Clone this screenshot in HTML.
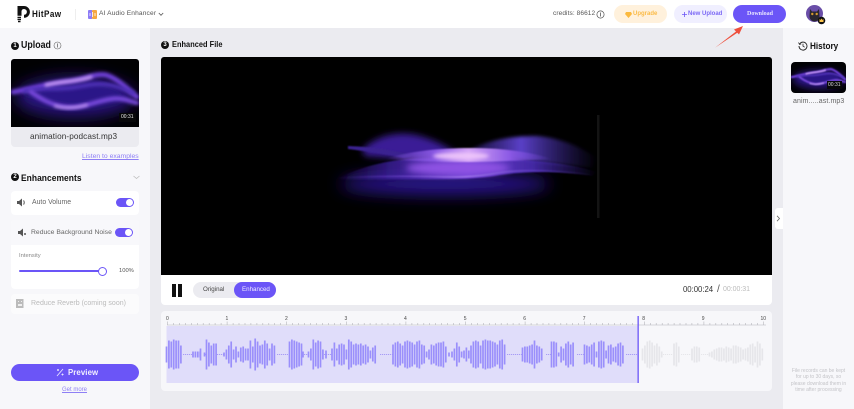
<!DOCTYPE html>
<html><head><meta charset="utf-8"><style>
html,body{margin:0;padding:0;width:854px;height:409px;overflow:hidden;background:#ebebf0;font-family:"Liberation Sans",sans-serif;color:#222}
div,span,svg{position:absolute;box-sizing:border-box;white-space:nowrap}
.num{width:8px;height:8px;border-radius:50%;background:#111;color:#fff;font-size:6px;line-height:8px;text-align:center;font-weight:bold}
.h{font-weight:bold;color:#111;line-height:12px;transform:scaleX(.9);transform-origin:0 50%}
.card{background:#fff;border-radius:4px}
.tog{width:18px;height:9px;border-radius:5px;background:#6b55f7}
.tog i{position:absolute;right:1px;top:1px;width:7px;height:7px;border-radius:50%;background:#fff}
.lb{color:#666;line-height:10px}
</style></head><body>
<svg width="0" height="0" style="left:0;top:0"><defs>
<linearGradient id="f2" x1="0" x2="1" y1="0" y2="0"><stop offset="0" stop-color="#3a1e9a" stop-opacity="0"/><stop offset=".2" stop-color="#3a1e9a" stop-opacity=".8"/><stop offset=".5" stop-color="#6e40d4"/><stop offset=".75" stop-color="#4a2cb4" stop-opacity=".9"/><stop offset="1" stop-color="#3a22a0" stop-opacity="0"/></linearGradient>
<linearGradient id="f3" x1="0" x2="1" y1="0" y2="0"><stop offset="0" stop-color="#8a58e4" stop-opacity="0"/><stop offset=".3" stop-color="#8a58e4"/><stop offset=".5" stop-color="#d4a4f6"/><stop offset=".75" stop-color="#8a58e4"/><stop offset="1" stop-color="#6a42d0" stop-opacity="0"/></linearGradient>
<linearGradient id="f4" x1="0" x2="1" y1="0" y2="0"><stop offset="0" stop-color="#7a50dc" stop-opacity="0"/><stop offset=".2" stop-color="#7a50dc" stop-opacity=".5"/><stop offset=".5" stop-color="#a880ee"/><stop offset=".8" stop-color="#6a42cc" stop-opacity=".5"/><stop offset="1" stop-color="#6a42cc" stop-opacity="0"/></linearGradient>
<linearGradient id="f5" x1="0" x2="1" y1="0" y2="0"><stop offset="0" stop-color="#4a30b0" stop-opacity=".3"/><stop offset=".4" stop-color="#5a40c8"/><stop offset="1" stop-color="#3a2595" stop-opacity="0"/></linearGradient>
<filter id="b0" x="-20%" y="-400%" width="140%" height="900%"><feGaussianBlur stdDeviation=".9"/></filter>
<filter id="b4" x="-20%" y="-100%" width="140%" height="300%"><feGaussianBlur stdDeviation="1.500"/></filter>
<filter id="b1" x="-30%" y="-100%" width="160%" height="300%"><feGaussianBlur stdDeviation="1.800"/></filter>
<filter id="b2" x="-30%" y="-150%" width="160%" height="400%"><feGaussianBlur stdDeviation="3.500"/></filter>
<filter id="b3" x="-40%" y="-300%" width="180%" height="700%"><feGaussianBlur stdDeviation="8"/></filter>
<symbol id="thumb" viewBox="0 0 128 68">
<rect width="128" height="68" fill="#010103"/>
<ellipse cx="64" cy="38" rx="60" ry="20" fill="#2a1480" filter="url(#b3)"/>
<path d="M5 33C30 30 60 28 80 22C100 24 115 34 125 40C110 38 90 42 70 47C50 48 30 40 5 33Z" fill="#2c1488" filter="url(#b2)"/>
<g fill="none" stroke-linecap="round">
<path d="M2 33C20 30 40 24 60 22C75 20 85 14 95 16C108 20 118 32 126 38" stroke="#7040d8" stroke-width="5" filter="url(#b4)"/>
<path d="M14 32C30 28 50 31 65 28C80 26 92 20 122 34" stroke="#5030b8" stroke-width="4" filter="url(#b4)"/>
<path d="M35 26C50 22 65 23 80 18" stroke="#d0a6f6" stroke-width="3" filter="url(#b4)"/>
<path d="M20 33C30 40 40 46 55 48C70 50 85 42 100 40C110 38 118 42 126 44" stroke="#7848dc" stroke-width="4.500" filter="url(#b4)"/>
<path d="M44 47C55 50 65 49 76 46" stroke="#cfa8f6" stroke-width="2.200" filter="url(#b4)"/>
</g>
</symbol>
</defs></svg>

<!-- header -->
<div style="left:0;top:0;width:854px;height:28px;background:#fff"></div>
<svg style="left:16px;top:5px" width="15" height="18" viewBox="0 0 15 18"><path d="M1.500 1H8A5.800 5.800 0 0 1 8 12.800L8 9.800A2.900 2.900 0 0 0 8 4C6 4 5.500 5.500 5.500 7V10.800H1.500Z" fill="#111"/><path d="M1.500 11.800h3.500v1.300H1.500zM1.500 13.800h3.500v1.300H1.500zM2 15.800h2.500V17.300H2z" fill="#111"/></svg>
<span class="h" style="left:32px;top:8px;font-size:9px;line-height:13px;letter-spacing:.45px">HitPaw</span>
<div style="left:75px;top:9px;width:1px;height:11px;background:#eee"></div>
<svg style="left:88px;top:10px" width="9" height="9" viewBox="0 0 9 9"><rect width="4.500" height="9" rx="1" fill="#8d7cf6"/><rect x="4" width="5" height="9" rx="1" fill="#f5a742"/><path d="M2 3v3M4.500 2v5M7 3v3" stroke="#fff" stroke-width=".8"/></svg>
<span style="left:99px;top:9px;font-size:6.600px;line-height:10px;color:#555;letter-spacing:.15px">AI Audio Enhancer</span>
<svg style="left:158px;top:12px" width="6" height="5" viewBox="0 0 6 5"><path d="M.8 1l2.200 2.300L5.200 1" fill="none" stroke="#555" stroke-width=".8"/></svg>
<span style="left:553px;top:9px;font-size:6.500px;line-height:10px;color:#555;letter-spacing:.1px">credits: 86612</span>
<svg style="left:596px;top:10px" width="9" height="9" viewBox="0 0 9 9"><circle cx="4.500" cy="4.500" r="3.600" fill="none" stroke="#555" stroke-width=".7"/><path d="M4.500 2.500v4" stroke="#555" stroke-width=".8"/></svg>
<div style="left:614px;top:5px;width:53px;height:18px;border-radius:9px;background:#fff1dc"></div>
<svg style="left:625px;top:12px" width="7" height="6" viewBox="0 0 7 6"><path d="M1 0h5l1 2-3.500 4L0 2z" fill="#fbb93e"/></svg>
<span style="left:633px;top:10px;font-size:6px;line-height:8px;font-weight:bold;color:#fbbb47">Upgrade</span>
<div style="left:674px;top:5px;width:53px;height:18px;border-radius:9px;background:#f0efff"></div>
<svg style="left:682px;top:12px" width="5" height="5" viewBox="0 0 5 5"><path d="M2.500 0v5M0 2.500h5" stroke="#6b55f7" stroke-width=".8"/></svg>
<span style="left:688px;top:10px;font-size:6px;line-height:8px;font-weight:bold;color:#7b68f5">New Upload</span>
<div style="left:733px;top:5px;width:53px;height:18px;border-radius:9px;background:#6b55f7"></div>
<span style="left:747px;top:10px;font-size:6px;line-height:8px;font-weight:bold;color:#e8e5ff;font-family:'Liberation Serif',serif">Download</span>
<svg style="left:806px;top:5px" width="20" height="20" viewBox="0 0 20 20"><circle cx="8.500" cy="8.500" r="8.500" fill="#6a4ea8"/><path d="M4 4l2 2.500h5L13 4l.5 7c0 3.500-2.500 5.500-5 5.500S3.500 14.500 3.500 11z" fill="#2a2630"/><circle cx="6.300" cy="9" r="1.200" fill="#d89a30"/><circle cx="10.700" cy="9" r="1.200" fill="#d89a30"/><circle cx="15.500" cy="15.500" r="3.800" fill="#111"/><path d="M13.500 14l1 1 1-1.500 1 1.500 1-1v3h-4z" fill="#fbc44b"/></svg>

<!-- panels -->
<div style="left:0;top:28px;width:150px;height:381px;background:#f7f7fa"></div>
<div style="left:783px;top:28px;width:71px;height:381px;background:#f7f7fa"></div>
<div style="left:775px;top:208px;width:8px;height:21px;background:#fff;border-radius:3px 0 0 3px"></div>
<svg style="left:776px;top:215px" width="5" height="7" viewBox="0 0 5 7"><path d="M1 .8l2.500 2.700L1 6.200" fill="none" stroke="#666" stroke-width=".8"/></svg>

<!-- upload -->
<div class="num" style="left:11px;top:42px">1</div>
<span class="h" style="left:21px;top:39px;font-size:9.800px;line-height:13px">Upload</span>
<svg style="left:53px;top:41px" width="9" height="9" viewBox="0 0 9 9"><circle cx="4.500" cy="4.500" r="3.500" fill="none" stroke="#666" stroke-width=".6"/><path d="M4.500 2.500v4" stroke="#666" stroke-width=".8"/></svg>
<div style="left:11px;top:127px;width:128px;height:20px;background:#ebebf0;border-radius:0 0 4px 4px"></div>
<svg style="left:11px;top:59px;border-radius:3px 3px 0 0" width="128" height="68"><use href="#thumb"/></svg>
<div style="left:119px;top:113px;width:17px;height:9px;background:#08080a"></div>
<span style="left:121px;top:114px;font-size:5px;line-height:7px;color:#eee">00:31</span>
<span style="left:30px;top:131px;font-size:8.200px;line-height:12px;color:#333;letter-spacing:.1px">animation-podcast.mp3</span>
<span style="left:82px;top:152px;font-size:6.800px;line-height:9px;color:#8e7ff5;text-decoration:underline">Listen to examples</span>

<!-- enhancements -->
<div class="num" style="left:11px;top:173px">2</div>
<span class="h" style="left:21px;top:171px;font-size:9.400px;line-height:13px;letter-spacing:.05px">Enhancements</span>
<svg style="left:133px;top:175px" width="7" height="5" viewBox="0 0 7 5"><path d="M.5 1l3 2.500 3-2.500" fill="none" stroke="#bbb" stroke-width=".7"/></svg>

<div class="card" style="left:11px;top:191px;width:128px;height:24px"></div>
<svg style="left:17px;top:198px" width="9" height="9" viewBox="0 0 9 9"><path d="M0 3h2l3-2.500v8L2 6H0z" fill="#555"/><path d="M6.500 2.500c1 1 1 3 0 4" fill="none" stroke="#555"/></svg>
<span class="lb" style="left:32px;top:198px;font-size:6.900px">Auto Volume</span>
<div class="tog" style="left:116px;top:198px"><i></i></div>

<div class="card" style="left:11px;top:220px;width:128px;height:69px"></div>
<div style="left:11px;top:220px;width:128px;height:25px;background:#f8f8fb;border-radius:4px 4px 0 0"></div>
<svg style="left:18px;top:228px" width="9" height="9" viewBox="0 0 9 9"><path d="M0 3h2l3-2.500v8L2 6H0z" fill="#555"/><circle cx="7" cy="6" r="1" fill="#555"/></svg>
<span class="lb" style="left:31px;top:228px;font-size:6.800px">Reduce Background Noise</span>
<div class="tog" style="left:115px;top:228px"><i></i></div>
<span style="left:19px;top:252px;font-size:5.800px;line-height:8px;color:#888">Intensity</span>
<div style="left:19px;top:270px;width:84px;height:2px;border-radius:1px;background:#6b55f7"></div>
<div style="left:98px;top:267px;width:9px;height:9px;border-radius:50%;background:#fff;border:1px solid #6b55f7"></div>
<span style="left:119px;top:267px;font-size:5.800px;line-height:8px;color:#555">100%</span>

<div style="left:11px;top:294px;width:128px;height:20px;background:#fbfbfc;border-radius:4px"></div>
<svg style="left:16px;top:299px" width="8" height="9" viewBox="0 0 8 9"><rect width="7.500" height="9" fill="#bbb"/><path d="M2 2h1v1H2zM5 2h1v1H5zM2 5h4v2H2z" fill="#eee"/></svg>
<span class="lb" style="left:31px;top:299px;font-size:7px;color:#bbb">Reduce Reverb (coming soon)</span>

<div style="left:11px;top:364px;width:128px;height:17px;border-radius:9px;background:#6b55f7"></div>
<svg style="left:56px;top:367px" width="9" height="10" viewBox="0 0 9 10"><path d="M1 9l6-7M2 2v2M1 3h2M6.500 6.500v2M5.500 7.500h2" stroke="#e6e2ff" stroke-width=".9" fill="none"/></svg>
<span style="left:68px;top:367px;font-size:7.800px;line-height:11px;font-weight:bold;color:#f2f0ff;letter-spacing:.1px">Preview</span>
<span style="left:62px;top:386px;font-size:6px;line-height:8px;color:#8e7ff5;text-decoration:underline">Get more</span>

<!-- center -->
<div class="num" style="left:161px;top:41px">3</div>
<span class="h" style="left:172px;top:39px;font-size:8.200px;line-height:12px;letter-spacing:.05px">Enhanced File</span>

<svg style="left:161px;top:57px;border-radius:3px 3px 0 0" width="611" height="218" viewBox="161 57 611 218">
<rect x="161" y="57" width="611" height="218" fill="#000"/>
<!-- underglow -->
<ellipse cx="445" cy="184" rx="105" ry="11" fill="#2c1290" filter="url(#b3)"/>
<!-- top lobes -->
<path d="M362 150C375 136 398 130 420 136C435 140 445 146 455 152L420 160L365 156Z" fill="#3a1e96" filter="url(#b2)"/>
<path d="M470 150C485 142 505 136 537 136C562 138 582 148 597 158L592 168L520 160L478 156Z" fill="url(#f5)" filter="url(#b1)"/>
<!-- left streak -->
<path d="M348 146C375 147 395 150 412 156L404 158C385 154 365 151 348 149Z" fill="#3a2090" filter="url(#b0)"/>
<!-- lower mass -->
<path d="M338 178C372 162 400 158 440 158C490 156 560 160 597 172L592 176C560 171 530 171 500 175C470 181 420 179 338 180Z" fill="url(#f2)" filter="url(#b0)"/>
<ellipse cx="458" cy="168" rx="52" ry="7" fill="#8f52e4" filter="url(#b2)"/>
<!-- upper central band -->
<path d="M385 159C410 151 440 148 470 148C495 148 525 150 552 159C510 161 490 162 460 162C435 162 410 161 385 159Z" fill="url(#f3)" filter="url(#b0)"/>
<ellipse cx="461" cy="156" rx="28" ry="3.500" fill="#f0c8fb" opacity=".9" filter="url(#b1)"/>
<!-- faint edge highlight -->
<path d="M337 178C370 176 397 176 430 176.500C450 177 470 178 497 173C515 170 545 169 593 175" fill="none" stroke="url(#f4)" stroke-width="1.300" filter="url(#b0)"/>
<rect x="597" y="115" width="2.500" height="103" fill="#141414"/>
</svg>

<div class="card" style="left:161px;top:275px;width:611px;height:30px;border-radius:0 0 4px 4px"></div>
<div style="left:172px;top:284px;width:4px;height:13px;background:#111"></div>
<div style="left:178px;top:284px;width:4px;height:13px;background:#111"></div>
<div style="left:193px;top:282px;width:83px;height:16px;border-radius:8px;background:#ebebf0"></div>
<div style="left:234px;top:282px;width:42px;height:16px;border-radius:8px;background:#6b55f7"></div>
<span style="left:203px;top:286px;font-size:6.200px;line-height:8px;color:#444">Original</span>
<span style="left:242px;top:286px;font-size:6.200px;line-height:8px;color:#efecff">Enhanced</span>
<span style="left:683px;top:285px;font-size:7.800px;line-height:10px;color:#333;letter-spacing:-.03px">00:00:24</span>
<span style="left:717px;top:284px;font-size:10px;line-height:11px;color:#555">/</span>
<span style="left:723px;top:285px;font-size:7px;line-height:10px;color:#bbb;letter-spacing:-.03px">00:00:31</span>

<!-- timeline -->
<div style="left:161px;top:311px;width:611px;height:80px;background:#f7f7fa;border-radius:4px"></div>
<svg style="left:161px;top:311px" width="611" height="80" viewBox="161 311 611 80">
<rect x="166.500" y="326" width="472" height="57" fill="#e0ddfa"/>
<path d="M167 325H766" stroke="#c9c9cf" stroke-width=".8"/>
<g stroke="#b5b5bb" stroke-width=".6"><path id="rk" d="M167.500 321.500V325M173.500 323V325M179.400 323V325M185.400 323V325M191.300 323V325M197.300 323V325M203.200 323V325M209.200 323V325M215.100 323V325M221.100 323V325"/><use href="#rk" x="59.600"/><use href="#rk" x="119.200"/><use href="#rk" x="178.800"/><use href="#rk" x="238.400"/><use href="#rk" x="298"/><use href="#rk" x="357.600"/><use href="#rk" x="417.200"/><use href="#rk" x="476.800"/><use href="#rk" x="536.400"/><path d="M763.500 321.500V325"/></g>
<g font-family="Liberation Sans" font-size="5" fill="#444"><text x="166" y="320">0</text><text x="225.500" y="320">1</text><text x="285" y="320">2</text><text x="344.500" y="320">3</text><text x="404" y="320">4</text><text x="463.800" y="320">5</text><text x="523.300" y="320">6</text><text x="582.800" y="320">7</text><text x="642.300" y="320">8</text><text x="701.800" y="320">9</text><text x="760.500" y="320">10</text></g>
<g transform="translate(0 354.500)" fill="none">
<path d="M183 0H192M205 0H206M217 0H224M277 0H288M304 0H308M324 0H332M380 0H393M507 0H522M546 0H551M577 0H584M626 0H637" stroke="#a89cf6" stroke-width="1" stroke-dasharray="1.200 .8"/>
<path d="M663 0H673M681 0H691M701 0H709" stroke="#e6e6ea" stroke-width="1" stroke-dasharray="1.200 .8"/>
<g stroke="#9a8ffb" stroke-width="1.700"><path id="wa" d="M166.500 0v-8m2.400 8v-14m2.400 14v-13m2.400 13v-15m2.400 15v-14m2.400 14v-14m2.400 14v-9
M193 0v-3m2.400 3v-3m2.400 3v-3m2.400 3v-3M200.500 0v-6M204.500 0v-2
M206.500 0v-15m2.400 15v-12m2.400 12v-9m2.400 9v-11m2.400 11v-11
M224 0v-2m2.400 2v-5m2.400 5v-9m2.400 9v-13m2.400 13v-5m2.400 5v-8m2.400 8v-3m2.400 3v-7m2.400 7v-8m2.400 8v-6m2.400 6v-6m2.400 6v-14m2.400 14v-8m2.400 8v-16m2.400 16v-13m2.400 13v-9m2.400 9v-10m2.400 10v-14m2.400 14v-11m2.400 11v-6m2.400 6v-11m2.400 11v-9
M289.500 0v-13m2.400 13v-15m2.400 15v-14m2.400 14v-13m2.400 13v-12m2.400 12v-11M303 0v-3
M308.500 0v-3m2.400 3v-6m2.400 6v-15m2.400 15v-12m2.400 12v-14m2.400 14v-13m2.400 13v-5M326 0v-4
M332 0v-6m2.400 6v-12m2.400 12v-6m2.400 6v-10m2.400 10v-11m2.400 11v-10m2.400 10v-5m2.400 5v-15m2.400 15v-13m2.400 13v-10m2.400 10v-11m2.400 11v-10m2.400 10v-11m2.400 11v-9m2.400 9v-10m2.400 10v-8m2.400 8v-4m2.400 4v-7m2.400 7v-9
M393 0v-10m2.400 10v-12m2.400 12v-13m2.400 13v-11m2.400 11v-9m2.400 9v-13m2.400 13v-14m2.400 14v-13m2.400 13v-12m2.400 12v-10m2.400 10v-13m2.400 13v-14m2.400 14v-10m2.400 10v-9m2.400 9v-3m2.400 3v-5m2.400 5v-10m2.400 10v-9m2.400 9v-11m2.400 11v-12m2.400 12v-12m2.400 12v-13m2.400 13v-8
M449 0v-2M452 0v-3m2.400 3v-6m2.400 6v-12m2.400 12v-8m2.400 8v-3m2.400 3v-4m2.400 4v-7m2.400 7v-4
M471 0v-9m2.400 9v-13m2.400 13v-14m2.400 14v-13m2.400 13v-9m2.400 9v-14m2.400 14v-15m2.400 15v-14m2.400 14v-14m2.400 14v-13m2.400 13v-12m2.400 12v-10m2.400 10v-14m2.400 14v-15m2.400 15v-10
M522.500 0v-7m2.400 7v-8m2.400 8v-8m2.400 8v-9m2.400 9v-10m2.400 10v-14m2.400 14v-9m2.400 9v-8m2.400 8v-6
M551.500 0v-13m2.400 13v-13m2.400 13v-12m2.400 12v-2m2.400 2v-8m2.400 8v-6m2.400 6v-11m2.400 11v-13m2.400 13v-10m2.400 10v-12
M584.500 0v-10m2.400 10v-9m2.400 9v-8m2.400 8v-10m2.400 10v-12m2.400 12v-3m2.400 3v-13m2.400 13v-14m2.400 14v-13m2.400 13v-4m2.400 4v-9m2.400 9v-10m2.400 10v-7m2.400 7v-8m2.400 8v-11m2.400 11v-12m2.400 12v-9"/><use href="#wa" transform="scale(1 -1)"/></g>
<g stroke="#e6e6ea" stroke-width="1.700"><path id="wb" d="M642.500 0v-6m2.400 6v-9m2.400 9v-13m2.400 13v-14m2.400 14v-12m2.400 12v-9m2.400 9v-11m2.400 11v-8m2.400 8v-3
M674 0v-11m2.400 11v-12m2.400 12v-8
M692 0v-6m2.400 6v-8m2.400 8v-8m2.400 8v-7
M709.500 0v-2m2.400 2v-3m2.400 3v-5m2.400 5v-6m2.400 6v-7m2.400 7v-7m2.400 7v-6m2.400 6v-8m2.400 8v-7m2.400 7v-6m2.400 6v-9m2.400 9v-9m2.400 9v-8m2.400 8v-7m2.400 7v-5m2.400 5v-6m2.400 6v-7m2.400 7v-10m2.400 10v-11m2.400 11v-8m2.400 8v-13m2.400 13v-11m2.400 11v-6"/><use href="#wb" transform="scale(1 -1)"/></g>
</g>
<rect x="637.500" y="316" width="1.300" height="67" fill="#6b55f7"/>
</svg>

<!-- arrow -->
<svg style="left:712px;top:22px" width="34" height="28" viewBox="712 22 34 28"><path d="M715 47.800L736 31.500L734 29.500L743 26L739 34.500L737.300 32.700Z" fill="#ee4f3c"/></svg>

<!-- history -->
<svg style="left:798px;top:41px" width="10" height="10" viewBox="0 0 10 10"><path d="M1.600 3A4 4 0 1 1 1 5" fill="none" stroke="#222" stroke-width=".9"/><path d="M.5 1.500l1 2 1.800-.6" fill="none" stroke="#222" stroke-width=".7"/><path d="M5 2.800V5.200L6.700 6.200" fill="none" stroke="#222" stroke-width=".8"/></svg>
<span class="h" style="left:810px;top:40px;font-size:9.100px">History</span>
<svg style="left:791px;top:62px;border-radius:4px" width="55" height="31" viewBox="0 0 128 68" preserveAspectRatio="none"><use href="#thumb"/></svg>
<div style="left:827px;top:81px;width:15px;height:8px;background:#08080a"></div>
<span style="left:828px;top:82px;font-size:5px;line-height:6px;color:#ddd">00:31</span>
<span style="left:793px;top:97px;font-size:7px;line-height:10px;color:#666;letter-spacing:.1px">anim.....ast.mp3</span>
<div style="left:783px;top:368px;width:71px;font-size:5px;line-height:6.300px;color:#c4c4c8;text-align:center">File records can be kept<br>for up to 30 days, so<br>please download them in<br>time after processing</div>
</body></html>
